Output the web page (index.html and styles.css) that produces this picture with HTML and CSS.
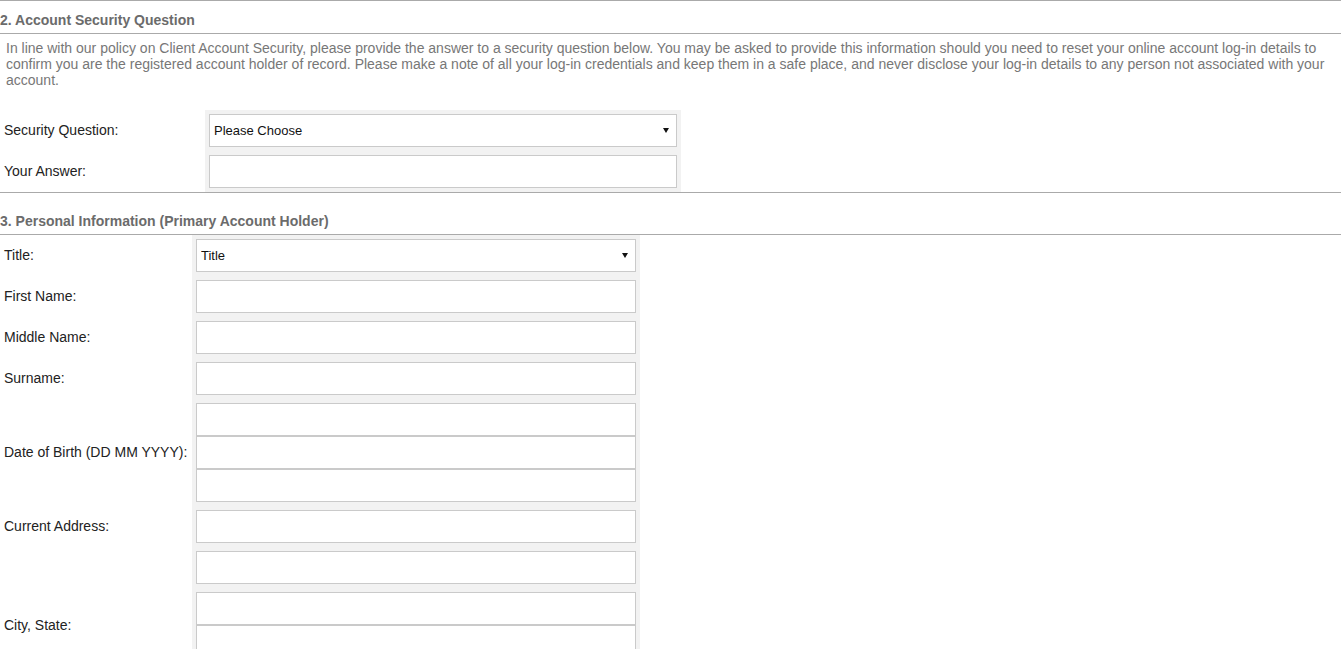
FILE: index.html
```html
<!DOCTYPE html>
<html lang="en">
<head>
  <meta charset="UTF-8">
  <title>Account Application</title>
  <link rel="stylesheet" href="styles.css">
</head>
<body>

  <!-- 2. 보안 질문 -->
  <div class="section">
    <div class="section-title">2. Account Security Question</div>
    <p class="intro">In line with our policy on Client Account Security, please provide the answer to a security question below. You may be asked to provide this information should you need to reset your online account log-in details to confirm you are the registered account holder of record. Please make a note of all your log-in credentials and keep them in a safe place, and never disclose your log-in details to any person not associated with your account.</p>

    <div class="form-grid security">
      <label class="field-label">Security Question:</label>
      <div class="field">
        <div class="select-wrap">
          <select class="select">
            <option>Please Choose</option>
          </select>
        </div>
      </div>

      <label class="field-label">Your Answer:</label>
      <div class="field">
        <input type="text" class="text-input">
      </div>
    </div>
  </div>

  <!-- 3. 개인 정보 -->
  <div class="section">
    <div class="section-title">3. Personal Information (Primary Account Holder)</div>

    <div class="form-grid personal">
      <label class="field-label">Title:</label>
      <div class="field">
        <div class="select-wrap">
          <select class="select">
            <option>Title</option>
          </select>
        </div>
      </div>

      <label class="field-label">First Name:</label>
      <div class="field"><input type="text" class="text-input"></div>

      <label class="field-label">Middle Name:</label>
      <div class="field"><input type="text" class="text-input"></div>

      <label class="field-label">Surname:</label>
      <div class="field"><input type="text" class="text-input"></div>

      <label class="field-label">Date of Birth (DD MM YYYY):</label>
      <div class="field stack">
        <input type="text" class="text-input">
        <input type="text" class="text-input">
        <input type="text" class="text-input">
      </div>

      <label class="field-label">Current Address:</label>
      <div class="field"><input type="text" class="text-input"></div>

      <label class="field-label"></label>
      <div class="field"><input type="text" class="text-input"></div>

      <label class="field-label">City, State:</label>
      <div class="field stack">
        <input type="text" class="text-input">
        <input type="text" class="text-input">
      </div>
    </div>
  </div>

</body>
</html>
```

FILE: styles.css
```css
body {
  font-family: 'Liberation Sans', Arial, sans-serif;
  font-size: 14px;
  color: #222;
  background-color: #fff;
  margin: 0;
}

.section {
  border-top: 1px solid #aaa;
}

.section-title {
  font-weight: bold;
  font-size: 14px;
  line-height: 16px;
  color: #6b6b6b;
  padding: 20px 0 5px 0;
  border-bottom: 1px solid #aaa;
}

.section:first-child .section-title {
  padding-top: 11px;
}

.intro {
  color: #777;
  line-height: 16px;
  margin: 6px 0 22px 0;
  padding: 0 6px;
}

/* 라벨 칸 + 입력 칸 */
.form-grid {
  display: grid;
}

.form-grid.security {
  grid-template-columns: 205px 476px;
}

.form-grid.personal {
  grid-template-columns: 192px 448px;
}

.field-label {
  display: flex;
  align-items: center;
  padding: 0 4px 1px 4px;
  white-space: nowrap;
  color: #222;
}

.field {
  background-color: #f2f2f2;
  padding: 4px;
}

.stack {
  display: flex;
  flex-direction: column;
}

.text-input,
.select {
  display: block;
  box-sizing: border-box;
  width: 100%;
  height: 33px;
  margin: 0;
  border: 1px solid #cacaca;
  border-radius: 0;
  background: #fff;
  font-family: inherit;
  font-size: 14px;
  color: #111;
  outline: none;
}

.text-input {
  padding: 0 5px;
}

.select-wrap {
  position: relative;
}

.select {
  appearance: none;
  -webkit-appearance: none;
  padding: 0 4px;
  font-size: 13px;
}

/* 드롭다운 화살표 */
.select-wrap::after {
  content: "";
  position: absolute;
  right: 8px;
  top: 14px;
  border-left: 3px solid transparent;
  border-right: 3px solid transparent;
  border-top: 5px solid #111;
  pointer-events: none;
}
```
